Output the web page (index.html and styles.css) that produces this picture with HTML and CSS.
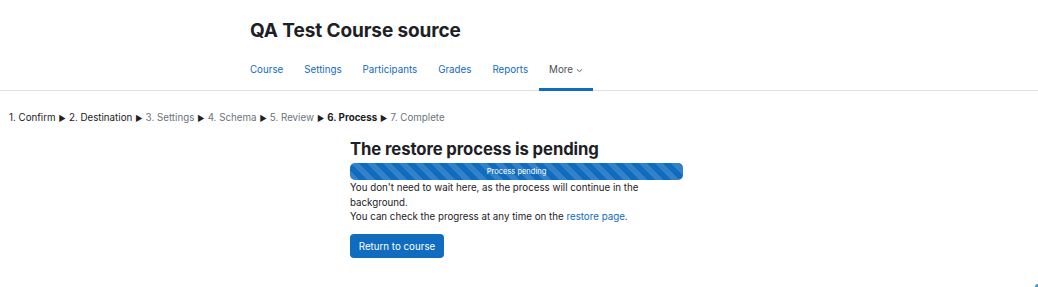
FILE: index.html
```html
<!DOCTYPE html>
<html lang="en">
<head>
<meta charset="utf-8">
<title>QA Test Course source: Restore</title>
<link rel="stylesheet" href="styles.css">
</head>
<body>
<header class="page-header">
  <div class="header-inner">
    <h1 class="course-title">QA Test Course source</h1>
    <nav class="secondary-nav">
      <a class="nav-item" href="#">Course</a>
      <a class="nav-item" href="#">Settings</a>
      <a class="nav-item" href="#">Participants</a>
      <a class="nav-item" href="#">Grades</a>
      <a class="nav-item" href="#">Reports</a>
      <a class="nav-item active" href="#">More <svg class="chev" width="7" height="5" viewBox="0 0 7 5"><path d="M0.9 1.3 L3.5 3.6 L6.1 1.3" fill="none" stroke="#495057" stroke-width="0.9"/></svg></a>
    </nav>
  </div>
</header>

<div class="steps"><span class="step done">1. Confirm</span><span class="sep">►</span><span class="step done">2. Destination</span><span class="sep">►</span><span class="step">3. Settings</span><span class="sep">►</span><span class="step">4. Schema</span><span class="sep">►</span><span class="step">5. Review</span><span class="sep">►</span><span class="step current">6. Process</span><span class="sep">►</span><span class="step">7. Complete</span></div>

<main class="restore">
  <h2 class="restore-title">The restore process is pending</h2>
  <div class="progress"><span class="progress-label">Process pending</span></div>
  <p class="restore-text">You don't need to wait here, as the process will continue in the background.<br>You can check the progress at any time on the <a href="#" class="link">restore page</a>.</p>
  <button class="btn-primary" type="button">Return to course</button>
</main>

<div class="corner-btn"></div>
</body>
</html>
```

FILE: styles.css
```css
html, body {
  margin: 0;
  padding: 0;
  background: #fff;
}
body {
  font-family: Inter, "Noto Sans", "Liberation Sans", sans-serif;
  color: #1d2125;
  font-size: 9.75px;
  line-height: 1.4;
  overflow: hidden;
  height: 287px;
}
a {
  color: #0f6cbf;
  text-decoration: none;
}
.page-header {
  border-bottom: 1px solid #dee2e6;
}
.header-inner {
  width: 538px;
  margin: 0 auto;
}
.course-title {
  margin: 0;
  padding-top: 17px;
  font-size: 19px;
  font-weight: 700;
  line-height: 28px;
  letter-spacing: -0.1px;
}
.secondary-nav {
  display: flex;
  margin-left: -10.5px;
  margin-top: 9px;
}
.nav-item {
  display: flex;
  align-items: center;
  gap: 3px;
  padding: 0 10.5px 3px;
  height: 37px;
  box-sizing: border-box;
  font-size: 9.75px;
  color: #0f6cbf;
  border-bottom: 3px solid transparent;
  margin-bottom: -1px;
}
.nav-item.active {
  color: #495057;
  border-bottom-color: #0f6cbf;
}
.chev {
  margin-top: 1px;
}
.steps {
  padding: 19px 0 0 9px;
  font-size: 9.75px;
  line-height: 16px;
  color: #6a737b;
}
.step.done {
  color: #1d2125;
}
.step.current {
  color: #1d2125;
  font-weight: 700;
}
.sep {
  color: #1d2125;
  font-size: 8px;
  padding: 0 3px;
}
.restore {
  margin-left: 350px;
  width: 333px;
  padding-top: 12px;
}
.restore-title {
  margin: 0;
  font-size: 16.7px;
  font-weight: 700;
  line-height: 22px;
  letter-spacing: -0.1px;
}
.progress {
  margin-top: 3px;
  height: 17px;
  border-radius: 5px;
  background-color: #0f6cbf;
  background-image: linear-gradient(45deg, rgba(255,255,255,0.15) 25%, transparent 25%, transparent 50%, rgba(255,255,255,0.15) 50%, rgba(255,255,255,0.15) 75%, transparent 75%, transparent);
  background-size: 16px 16px;
  display: flex;
  align-items: center;
  justify-content: center;
}
.progress-label {
  color: #fff;
  font-size: 7.5px;
  line-height: 1;
}
.restore-text {
  margin: 1px 0 0;
  line-height: 14.7px;
  font-size: 9.75px;
}
.btn-primary {
  margin-top: 9px;
  background: #0f6cbf;
  color: #fff;
  border: none;
  border-radius: 4px;
  font-family: Inter, "Noto Sans", "Liberation Sans", sans-serif;
  font-size: 9.75px;
  width: 94px;
  height: 24px;
  padding: 0;
  cursor: pointer;
}
.corner-btn {
  position: fixed;
  right: -6px;
  bottom: -6px;
  width: 9px;
  height: 9px;
  border-radius: 3px;
  background: #3f9bd0;
}
```
